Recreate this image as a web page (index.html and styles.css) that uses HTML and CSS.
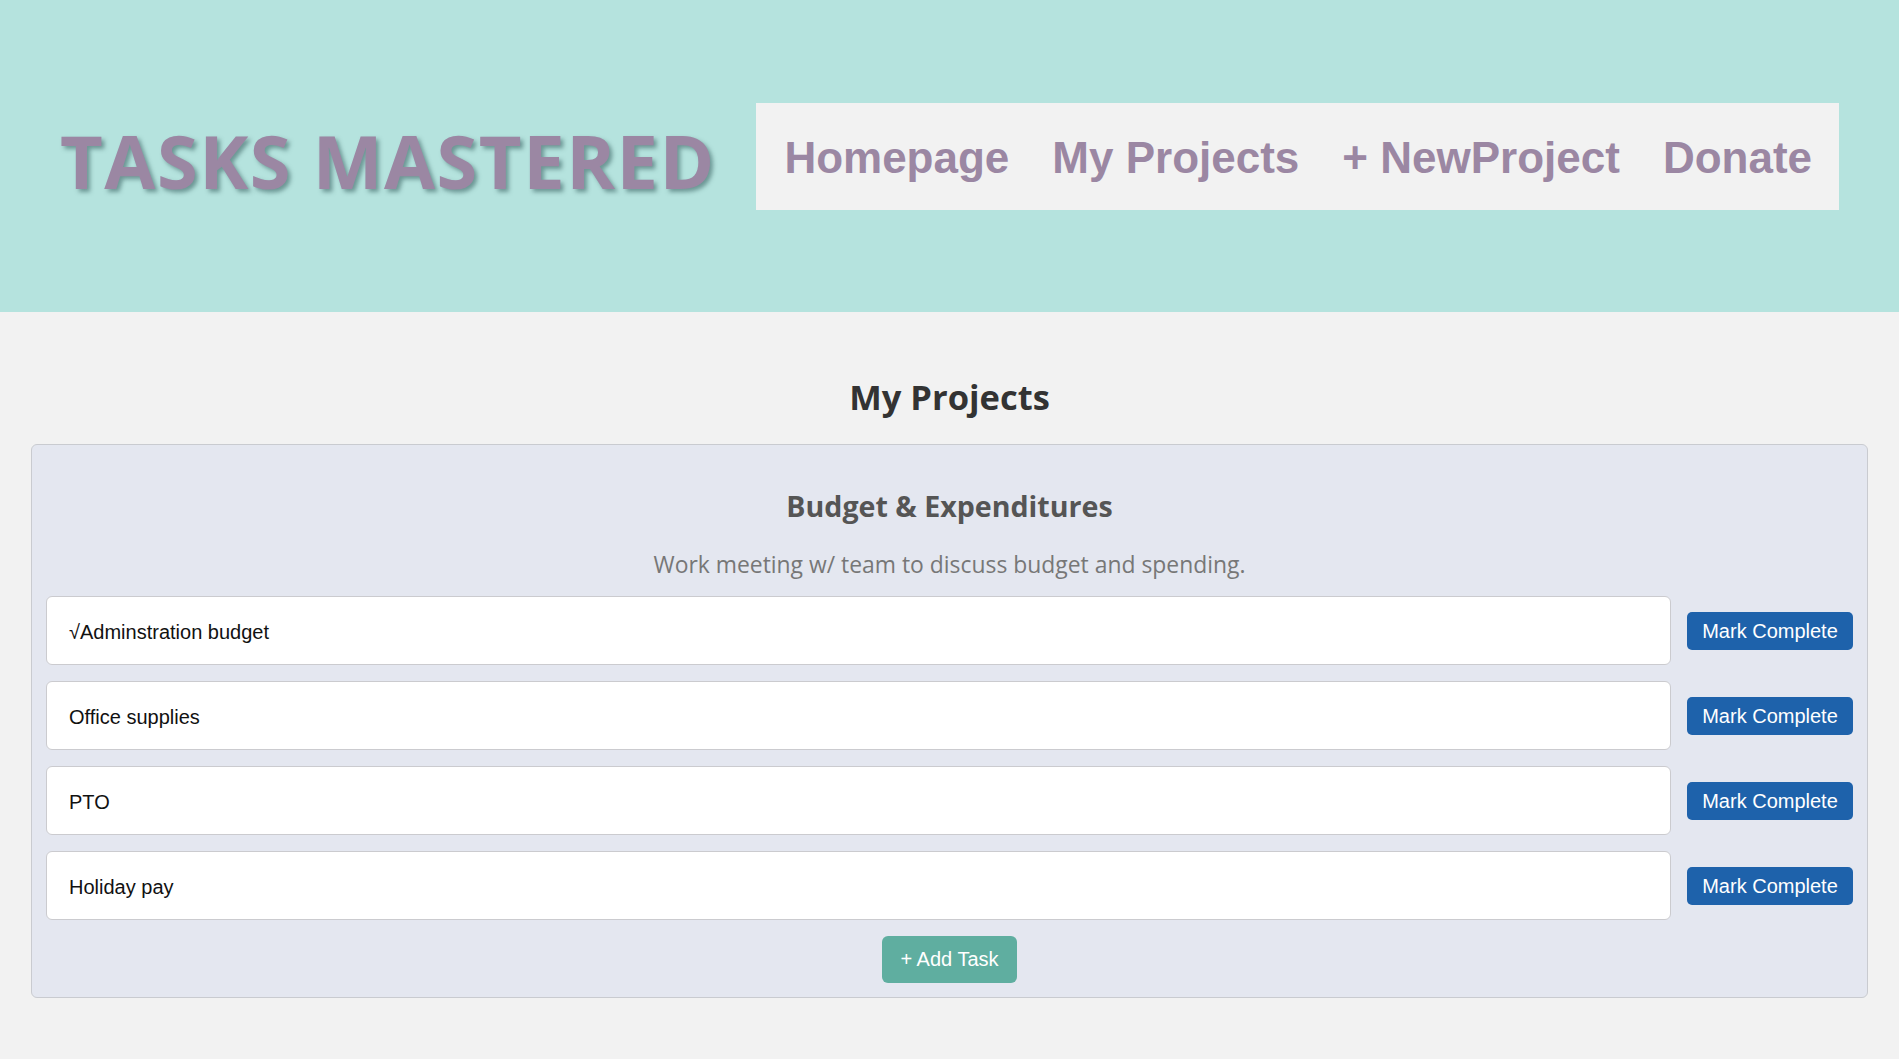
FILE: index.html
```html
<!DOCTYPE html>
<html lang="en">
<head>
<meta charset="utf-8">
<title>Tasks Mastered - My Projects</title>
<link rel="stylesheet" href="styles.css">
</head>
<body>
<header class="site-header">
  <h1 class="logo">TASKS MASTERED</h1>
  <nav class="nav">
    <a class="nav-link" href="#">Homepage</a>
    <a class="nav-link" href="#">My Projects</a>
    <a class="nav-link" href="#">+ NewProject</a>
    <a class="nav-link" href="#">Donate</a>
  </nav>
</header>
<main class="main">
  <h2 class="page-title">My Projects</h2>
  <section class="project-card">
    <h3 class="project-title">Budget &amp; Expenditures</h3>
    <p class="project-desc">Work meeting w/ team to discuss budget and spending.</p>
    <ul class="task-list">
      <li class="task-row"><div class="task">√Adminstration budget</div><button class="btn-complete">Mark Complete</button></li>
      <li class="task-row"><div class="task">Office supplies</div><button class="btn-complete">Mark Complete</button></li>
      <li class="task-row"><div class="task">PTO</div><button class="btn-complete">Mark Complete</button></li>
      <li class="task-row"><div class="task">Holiday pay</div><button class="btn-complete">Mark Complete</button></li>
    </ul>
    <div class="add-wrap"><button class="btn-add">+ Add Task</button></div>
  </section>
</main>
</body>
</html>
```
FILE: styles.css
```css
* { box-sizing: border-box; }
html, body { margin: 0; padding: 0; }
body {
  background: #f2f2f2;
  font-family: "Open Sans", "Noto Sans", sans-serif;
  min-height: 1059px;
}
.site-header {
  height: 312px;
  background: #b5e3de;
  display: flex;
  align-items: center;
  padding: 0 60px;
  justify-content: space-between;
}
.logo {
  margin: 0;
  font-family: "Open Sans", sans-serif;
  font-weight: 700;
  font-size: 74px;
  line-height: 1;
  color: #9b87a3;
  text-shadow: 3px 3px 4px rgba(50, 90, 90, 0.55);
  letter-spacing: 1.5px;
  position: relative;
  top: 5px;
}
.nav {
  background: #f2f2f2;
  height: 107px;
  display: flex;
  align-items: center;
  gap: 43px;
  padding: 0 27px 0 28px;
}
.nav-link {
  font-family: "Liberation Sans", Arial, sans-serif;
  font-weight: 700;
  font-size: 44px;
  color: #9b87a3;
  text-decoration: none;
  position: relative;
  top: 2px;
}
.main {
  padding: 0 31px 40px;
}
.page-title {
  margin: 60px 0 23px;
  text-align: center;
  font-size: 34.5px;
  line-height: 49px;
  font-weight: 700;
  color: #333;
}
.project-card {
  background: #e4e7f0;
  border: 1px solid #c9cbd0;
  border-radius: 6px;
  padding: 14px;
}
.project-title {
  margin: 28px 0 0;
  text-align: center;
  font-size: 28.6px;
  line-height: 38px;
  font-weight: 700;
  color: #555;
}
.project-desc {
  margin: 25px 0 0;
  text-align: center;
  font-size: 22.9px;
  line-height: 30px;
  color: #777;
}
.task-list {
  list-style: none;
  margin: 16px 0 0;
  padding: 0;
  display: flex;
  flex-direction: column;
  gap: 16px;
}
.task-row {
  display: flex;
  align-items: center;
  gap: 16px;
}
.task {
  flex: 1;
  height: 69px;
  display: flex;
  align-items: center;
  background: #fff;
  border: 1px solid #cbcbcf;
  border-radius: 6px;
  padding: 3px 0 0 22px;
  font-family: "Liberation Sans", Arial, sans-serif;
  font-size: 20px;
  color: #111;
}
.btn-complete {
  width: 166px;
  height: 38px;
  border: none;
  border-radius: 5px;
  background: #1e62ab;
  color: #fff;
  font-family: "Liberation Sans", Arial, sans-serif;
  font-size: 20px;
  padding: 1px 0 0;
  cursor: pointer;
}
.add-wrap {
  display: flex;
  justify-content: center;
  margin-top: 16px;
}
.btn-add {
  width: 135px;
  height: 47px;
  border: none;
  border-radius: 6px;
  background: #5faea0;
  color: #fff;
  font-family: "Liberation Sans", Arial, sans-serif;
  font-size: 20px;
  padding: 0;
  cursor: pointer;
}
```
